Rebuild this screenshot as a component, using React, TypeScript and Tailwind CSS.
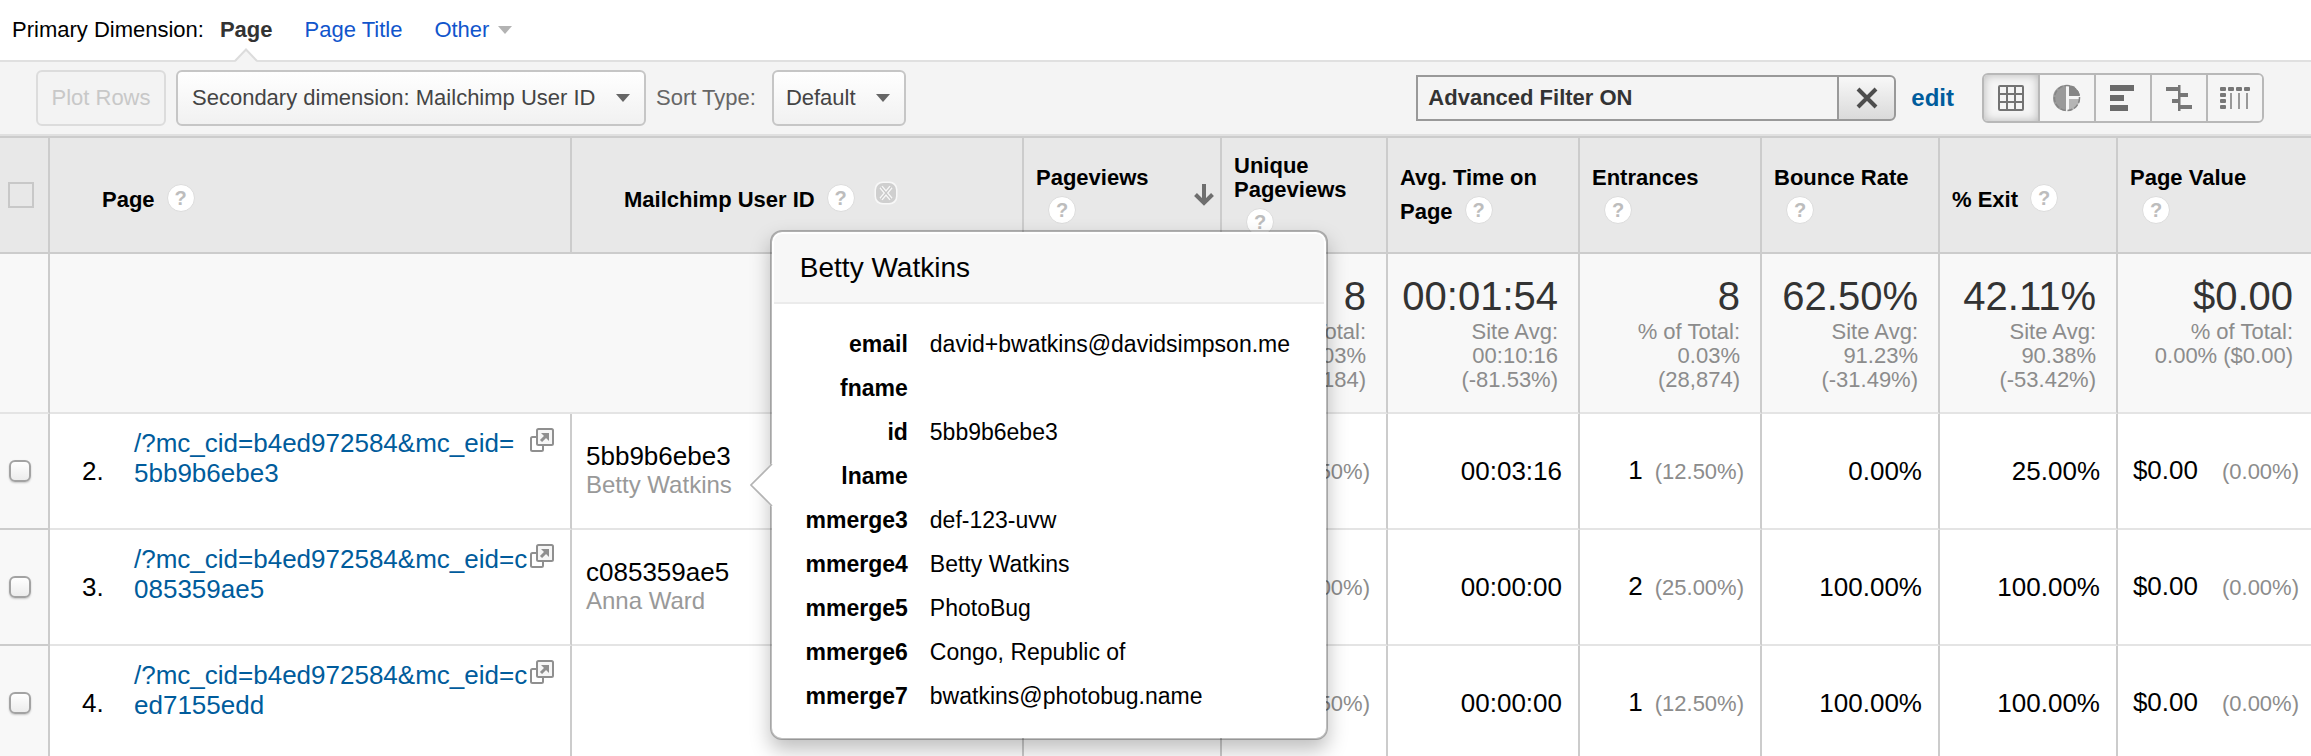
import type { ReactNode } from "react";

type Row = {
  rank: number;
  pathTop: string;
  pathBottom: string;
  userId?: string;
  userName?: string;
  unique: [string, string];
  time: string;
  entrances: [string, string];
  bounce: string;
  exit: string;
  value: [string, string];
};

const rows: Row[] = [
  {
    rank: 2,
    pathTop: "/?mc_cid=b4ed972584&mc_eid=",
    pathBottom: "5bb9b6ebe3",
    userId: "5bb9b6ebe3",
    userName: "Betty Watkins",
    unique: ["1", "(12.50%)"],
    time: "00:03:16",
    entrances: ["1", "(12.50%)"],
    bounce: "0.00%",
    exit: "25.00%",
    value: ["$0.00", "(0.00%)"],
  },
  {
    rank: 3,
    pathTop: "/?mc_cid=b4ed972584&mc_eid=c",
    pathBottom: "085359ae5",
    userId: "c085359ae5",
    userName: "Anna Ward",
    unique: ["2", "(25.00%)"],
    time: "00:00:00",
    entrances: ["2", "(25.00%)"],
    bounce: "100.00%",
    exit: "100.00%",
    value: ["$0.00", "(0.00%)"],
  },
  {
    rank: 4,
    pathTop: "/?mc_cid=b4ed972584&mc_eid=c",
    pathBottom: "ed7155edd",
    unique: ["1", "(12.50%)"],
    time: "00:00:00",
    entrances: ["1", "(12.50%)"],
    bounce: "100.00%",
    exit: "100.00%",
    value: ["$0.00", "(0.00%)"],
  },
];

const profile: [string, string][] = [
  ["email", "david+bwatkins@davidsimpson.me"],
  ["fname", ""],
  ["id", "5bb9b6ebe3"],
  ["lname", ""],
  ["mmerge3", "def-123-uvw"],
  ["mmerge4", "Betty Watkins"],
  ["mmerge5", "PhotoBug"],
  ["mmerge6", "Congo, Republic of"],
  ["mmerge7", "bwatkins@photobug.name"],
];

function Caret({ className }: { className: string }) {
  return (
    <svg viewBox="0 0 14 8" className={className} aria-hidden="true">
      <path d="M0 0h14L7 8z" fill="currentColor" />
    </svg>
  );
}

function Help({ label }: { label: string }) {
  return (
    <button
      type="button"
      aria-label={`Help: ${label}`}
      className="mt-1.5 ml-3 inline-flex size-7 items-center justify-center rounded-full border border-[#dcdcdc] bg-white align-[2px] text-xl leading-none font-bold text-[#bdbdbd]"
    >
      ?
    </button>
  );
}

function Head({ children, className = "pl-3" }: { children: ReactNode; className?: string }) {
  return (
    <th
      scope="col"
      className={`border-t-2 border-r-2 border-b-2 border-[#ccc] bg-[#e8e8e8] text-left align-middle text-[22px] leading-6 font-bold whitespace-nowrap text-black last:border-r-0 ${className}`}
    >
      {children}
    </th>
  );
}

function Summary({ big, lines, className = "pr-5" }: { big: string; lines: string[]; className?: string }) {
  return (
    <td
      className={`border-r-2 border-b-2 border-r-[#ccc] border-b-[#e4e4e4] bg-[#f8f8f8] pt-[22px] text-right align-top whitespace-nowrap last:border-r-0 ${className}`}
    >
      <div className="text-[40px] leading-10 text-[#333]">{big}</div>
      <div className="mt-1 text-[22px] leading-6 text-[#8c8c8c]">
        {lines.map((l) => (
          <div key={l}>{l}</div>
        ))}
      </div>
    </td>
  );
}

function Cell({ children, className = "pr-4" }: { children?: ReactNode; className?: string }) {
  return (
    <td
      className={`border-r-2 border-b-2 border-r-[#ccc] border-b-[#e4e4e4] text-right align-middle text-[26px] leading-[30px] whitespace-nowrap text-black last:border-r-0 ${className}`}
    >
      {children}
    </td>
  );
}

function Pair({ pair, gap }: { pair: [string, string]; gap: string }) {
  return (
    <div className={`flex items-baseline justify-end ${gap}`}>
      <span>{pair[0]}</span>
      <span className="text-[22px] text-[#8c8c8c]">{pair[1]}</span>
    </div>
  );
}

function Popover() {
  return (
    <div
      role="tooltip"
      className="absolute top-1/2 left-full ml-[38px] w-[558px] -translate-y-1/2 rounded-xl border-2 border-black/25 bg-white bg-clip-padding p-0.5 text-black shadow-[0_10px_20px_rgba(0,0,0,0.25)]"
    >
      <svg
        viewBox="0 0 24 44"
        className="absolute top-1/2 -left-[22px] h-11 w-6 -translate-y-1/2"
        aria-hidden="true"
      >
        <path d="M22 0L1 22l21 22h2V0z" fill="#fff" />
        <path d="M22 1L1 22l21 21" fill="none" stroke="#b4b4b4" strokeWidth="1.6" />
      </svg>
      <h3 className="rounded-t-lg border-b-2 border-[#ebebeb] bg-[#f7f7f7] px-[26px] py-4 text-[28px] leading-9">
        Betty Watkins
      </h3>
      <dl className="grid grid-cols-[108px_1fr] gap-x-[22px] gap-y-4 py-[26px] pl-[26px] text-[23px] leading-7">
        {profile.map(([k, v]) => (
          <div key={k} className="contents">
            <dt className="text-right font-bold">{k}</dt>
            <dd className="whitespace-nowrap">{v}</dd>
          </div>
        ))}
      </dl>
    </div>
  );
}

function OpenIcon() {
  return (
    <svg viewBox="0 0 24 24" className="size-6" fill="none" stroke="#8f8f8f" strokeWidth="2" aria-hidden="true">
      <path d="M6 9H2.500Q1 9 1 10.500v11Q1 23 2.500 23h9q1.500 0 1.500-1.500V18" />
      <rect x="7" y="1" width="16" height="16" rx="1.500" fill="#f6f6f6" />
      <path d="M11 13l5-5" strokeWidth="3" />
      <path d="M11 5h8v8z" fill="#8f8f8f" stroke="none" />
    </svg>
  );
}

const views: { label: string; art: ReactNode }[] = [
  {
    label: "Data table",
    art: (
      <>
        <rect x="3" y="1" width="26" height="26" rx="2" fill="#737373" />
        {[5, 13, 21].map((x) =>
          [3, 11, 19].map((y) => (
            <rect key={`${x}-${y}`} x={x} y={y} width="6" height="6" fill="#f4f4f4" />
          )),
        )}
      </>
    ),
  },
  {
    label: "Percentage",
    art: (
      <>
        <path d="M15 1a13 13 0 0 0 0 26z" fill="#9a9a9a" />
        <path d="M18 1a13 13 0 0 1 11 11H18z" fill="#858585" />
        <path d="M18 15h11a13 13 0 0 1-11 12z" fill="#b5b5b5" />
        <circle cx="16" cy="14" r="12.500" fill="none" stroke="#858585" strokeWidth="1.500" strokeDasharray="5 2" />
      </>
    ),
  },
  {
    label: "Performance",
    art: (
      <g fill="#6b6b6b">
        <rect x="3" y="1" width="24" height="6" />
        <rect x="3" y="11" width="14" height="6" />
        <rect x="3" y="21" width="18" height="6" />
      </g>
    ),
  },
  {
    label: "Comparison",
    art: (
      <g fill="#777">
        <rect x="15" y="1" width="2.500" height="26" />
        <rect x="3" y="3" width="13" height="4" />
        <rect x="16" y="9" width="9" height="4" />
        <rect x="9" y="15" width="7" height="4" />
        <rect x="16" y="21" width="13" height="4" />
      </g>
    ),
  },
  {
    label: "Pivot",
    art: (
      <g fill="#777">
        {[1, 9, 17, 25].map((x) => (
          <rect key={x} x={x} y="3" width="6" height="4" rx="1" />
        ))}
        {[9, 15, 21].map((y) => (
          <rect key={y} x="1" y={y} width="6" height="4" rx="1" />
        ))}
        {[11, 19, 27].map((x) => (
          <rect key={x} x={x} y="9" width="2" height="16" fill="#999" />
        ))}
      </g>
    ),
  },
];

export default function App() {
  return (
    <div className="h-screen overflow-hidden bg-white font-['Liberation_Sans',Arial,sans-serif] text-[22px] leading-7 text-black">
      <nav className="flex h-[62px] items-center border-b-2 border-[#e0e0e0] pl-3 whitespace-nowrap" aria-label="Primary dimension">
        <span>Primary Dimension:</span>
        <div className="relative ml-4 flex h-full items-center">
          <a href="#page" className="font-bold text-[#333]">
            Page
          </a>
          <svg viewBox="0 0 24 14" className="absolute -bottom-0.5 left-1/2 h-3.5 w-6 -translate-x-1/2" aria-hidden="true">
            <path d="M1 14L12 2l11 12z" fill="#f4f4f4" />
            <path d="M1 13L12 1.500 23 13" fill="none" stroke="#dcdcdc" strokeWidth="2" />
          </svg>
        </div>
        <a href="#title" className="ml-8 text-[#15c]">
          Page Title
        </a>
        <a href="#other" className="ml-8 flex items-center gap-2 text-[#15c]">
          Other
          <Caret className="h-2 w-4 text-[#b3b3b3]" />
        </a>
      </nav>

      <div className="flex h-[74px] items-center border-b-2 border-[#e0e0e0] bg-[#f4f4f4] pr-[47px] pl-9 whitespace-nowrap">
        <button
          type="button"
          disabled
          className="h-14 w-[130px] rounded-md border-2 border-[#dcdcdc] bg-[#f3f3f3] text-[#c8c8c8]"
        >
          Plot Rows
        </button>
        <div className="relative ml-2.5">
          <select
            aria-label="Secondary dimension"
            className="h-14 w-[470px] appearance-none rounded-md border-2 border-[#c6c6c6] bg-linear-to-b from-white to-[#f1f1f1] pl-3.5 text-[#444]"
          >
            <option>Secondary dimension: Mailchimp User ID</option>
          </select>
          <Caret className="pointer-events-none absolute top-6 right-4 h-2 w-3.5 text-[#666]" />
        </div>
        <label htmlFor="sort-type" className="ml-2.5 text-[#666]">
          Sort Type:
        </label>
        <div className="relative ml-4">
          <select
            id="sort-type"
            className="h-14 w-[134px] appearance-none rounded-md border-2 border-[#c6c6c6] bg-linear-to-b from-white to-[#f1f1f1] pl-3 text-[#444]"
          >
            <option>Default</option>
          </select>
          <Caret className="pointer-events-none absolute top-6 right-4 h-2 w-3.5 text-[#666]" />
        </div>

        <div className="ml-auto flex items-center">
          <input
            type="text"
            aria-label="Filter"
            defaultValue="Advanced Filter ON"
            className="h-[46px] w-[421px] border-2 border-r-0 border-[#999] bg-[#f4f4f4] px-2.5 font-bold text-[#333] outline-none"
          />
          <button
            type="button"
            aria-label="Clear filter"
            className="flex h-[46px] w-[59px] items-center justify-center rounded-r-md border-2 border-[#999] bg-linear-to-b from-[#f8f8f8] to-[#dadada]"
          >
            <svg viewBox="0 0 22 22" className="size-[22px]" aria-hidden="true">
              <path d="M2 2l18 18M20 2L2 20" stroke="#4d4d4d" strokeWidth="4" fill="none" />
            </svg>
          </button>
          <a href="#edit" className="ml-[15px] text-2xl font-bold text-[#005c9c]">
            edit
          </a>
          <div className="ml-7 flex h-[50px] overflow-hidden rounded-md border-2 border-[#b8b8b8]">
            {views.map((v) => (
              <button
                key={v.label}
                type="button"
                aria-label={v.label}
                className="flex w-14 items-center justify-center border-r-2 border-[#b8b8b8] bg-[#f5f5f5] first:shadow-[inset_0_0_10px_rgba(0,0,0,0.25)] last:w-[54px] last:border-r-0"
              >
                <svg viewBox="0 0 32 28" className="h-7 w-8" aria-hidden="true">
                  {v.art}
                </svg>
              </button>
            ))}
          </div>
        </div>
      </div>

      <table className="w-full table-fixed border-separate border-spacing-0">
        <colgroup>
          <col className="w-[50px]" />
          <col className="w-[522px]" />
          <col />
          <col className="w-[198px]" />
          <col className="w-[166px]" />
          <col className="w-[192px]" />
          <col className="w-[182px]" />
          <col className="w-[178px]" />
          <col className="w-[178px]" />
          <col className="w-[193px]" />
        </colgroup>
        <thead>
          <tr className="h-[118px]">
            <Head className="pl-2">
              <input
                type="checkbox"
                aria-label="Select all rows"
                className="block size-[26px] appearance-none border-2 border-[#c8c8c8] bg-transparent"
              />
            </Head>
            <Head className="pl-[52px]">
              Page
              <Help label="Page" />
            </Head>
            <Head className="pl-[52px]">
              Mailchimp User ID
              <Help label="Mailchimp User ID" />
              <button type="button" aria-label="Remove dimension" className="ml-[19px] inline-block size-6 align-[2px]">
                <svg viewBox="0 0 24 24" className="block size-6" aria-hidden="true">
                  <rect x="0.500" y="0.500" width="23" height="23" rx="8" fill="#f8f8f8" />
                  <rect x="2" y="2" width="20" height="20" rx="7" fill="#cfcfcf" />
                  <path d="M7 6l10 12M17 6L7 18" stroke="#f8f8f8" strokeWidth="4" fill="none" />
                  <path d="M7 6l10 12M17 6L7 18" stroke="#c8c8c8" strokeWidth="1.200" fill="none" />
                </svg>
              </button>
            </Head>
            <Head className="pr-1.5 pl-3">
              <div className="flex items-center justify-between">
                <div>
                  Pageviews
                  <br />
                  <Help label="Pageviews" />
                </div>
                <svg viewBox="0 0 20 22" className="h-[22px] w-5" fill="none" stroke="#6e6e6e" strokeWidth="4" role="img" aria-label="Sorted descending">
                  <path d="M10 0v19M1.500 10.500l8.500 8.500 8.500-8.500" />
                </svg>
              </div>
            </Head>
            <Head>
              Unique
              <br />
              Pageviews
              <br />
              <Help label="Unique Pageviews" />
            </Head>
            <Head>
              Avg. Time on
              <br />
              Page
              <Help label="Avg. Time on Page" />
            </Head>
            <Head>
              Entrances
              <br />
              <Help label="Entrances" />
            </Head>
            <Head>
              Bounce Rate
              <br />
              <Help label="Bounce Rate" />
            </Head>
            <Head>
              % Exit
              <Help label="% Exit" />
            </Head>
            <Head>
              Page Value
              <br />
              <Help label="Page Value" />
            </Head>
          </tr>
        </thead>
        <tbody>
          <tr className="h-40">
            <td className="border-r-2 border-b-2 border-r-[#ccc] border-b-[#e4e4e4] bg-[#f8f8f8]" />
            <td colSpan={2} className="border-r-2 border-b-2 border-r-[#ccc] border-b-[#e4e4e4] bg-[#f8f8f8]" />
            <td className="border-r-2 border-b-2 border-r-[#ccc] border-b-[#e4e4e4] bg-[#f8f8f8]" />
            <Summary big="8" lines={["% of Total:", "0.03%", "(27,184)"]} />
            <Summary big="00:01:54" lines={["Site Avg:", "00:10:16", "(-81.53%)"]} />
            <Summary big="8" lines={["% of Total:", "0.03%", "(28,874)"]} />
            <Summary big="62.50%" lines={["Site Avg:", "91.23%", "(-31.49%)"]} />
            <Summary big="42.11%" lines={["Site Avg:", "90.38%", "(-53.42%)"]} />
            <Summary big="$0.00" lines={["% of Total:", "0.00% ($0.00)"]} className="pr-[18px]" />
          </tr>
          {rows.map((r) => (
            <tr key={r.rank} className="h-[116px]">
              <td className="border-r-2 border-b-2 border-[#ccc] bg-[#f8f8f8] pl-[9px] align-middle">
                <input
                  type="checkbox"
                  aria-label={`Select row ${r.rank}`}
                  className="block size-[22px] appearance-none rounded-md border-2 border-[#a3a3a3] bg-linear-to-b from-white to-[#ececec] shadow-[0_1px_2px_rgba(0,0,0,0.2)]"
                />
              </td>
              <Cell className="pl-8">
                <div className="flex items-center text-left">
                  <span className="w-[52px]">{r.rank}.</span>
                  <div className="flex h-[86px] grow justify-between pr-4">
                    <a href="#row" className="text-[#005c9c]">
                      {r.pathTop}
                      <br />
                      {r.pathBottom}
                    </a>
                    <a href="#open" aria-label={`Open page ${r.rank}`} className="h-6">
                      <OpenIcon />
                    </a>
                  </div>
                </div>
              </Cell>
              <Cell className="pl-3.5">
                {r.userId && (
                  <div className="text-left">
                    <div>{r.userId}</div>
                    <div className="relative inline-block align-top text-2xl leading-7 text-[#999]">
                      {r.userName}
                      {r.rank === 2 && <Popover />}
                    </div>
                  </div>
                )}
              </Cell>
              <Cell />
              <Cell>
                <Pair pair={r.unique} gap="gap-3" />
              </Cell>
              <Cell>{r.time}</Cell>
              <Cell>
                <Pair pair={r.entrances} gap="gap-3" />
              </Cell>
              <Cell>{r.bounce}</Cell>
              <Cell>{r.exit}</Cell>
              <Cell className="pr-3">
                <Pair pair={r.value} gap="gap-6" />
              </Cell>
            </tr>
          ))}
        </tbody>
      </table>
    </div>
  );
}
